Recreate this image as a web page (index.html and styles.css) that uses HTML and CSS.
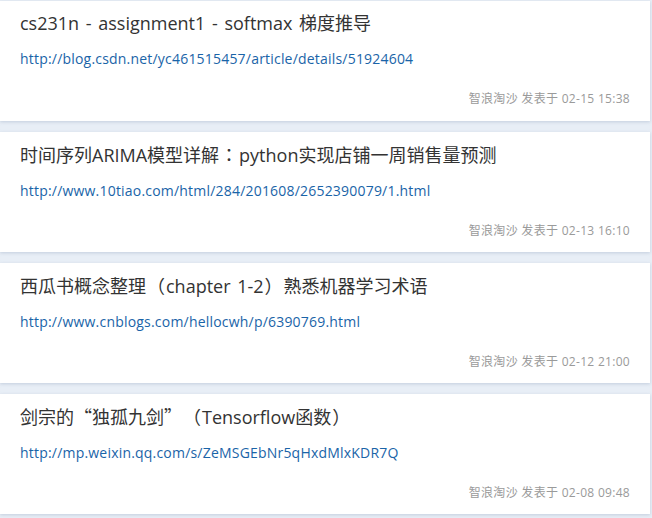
FILE: index.html
```html
<!DOCTYPE html>
<html lang="zh">
<head>
<meta charset="utf-8">
<link rel="stylesheet" href="styles.css">
</head>
<body>
<div class="list">
  <div class="card">
    <div class="title">cs231n - assignment1 - softmax 梯度推导</div>
    <a class="url" href="#">http://blog.csdn.net/yc461515457/article/details/51924604</a>
    <div class="meta">智浪淘沙 发表于 02-15 15:38</div>
  </div>
  <div class="card">
    <div class="title">时间序列ARIMA模型详解<span class="p">：</span>python实现店铺一周销售量预测</div>
    <a class="url" href="#">http://www.10tiao.com/html/284/201608/2652390079/1.html</a>
    <div class="meta">智浪淘沙 发表于 02-13 16:10</div>
  </div>
  <div class="card">
    <div class="title">西瓜书概念整理<span class="p">（</span>chapter 1-2<span class="p">）</span>熟悉机器学习术语</div>
    <a class="url" href="#">http://www.cnblogs.com/hellocwh/p/6390769.html</a>
    <div class="meta">智浪淘沙 发表于 02-12 21:00</div>
  </div>
  <div class="card">
    <div class="title">剑宗的<span class="q ql">“</span>独孤九剑<span class="q">”</span><span class="p">（</span>Tensorflow函数<span class="p">）</span></div>
    <a class="url" href="#">http://mp.weixin.qq.com/s/ZeMSGEbNr5qHxdMlxKDR7Q</a>
    <div class="meta">智浪淘沙 发表于 02-08 09:48</div>
  </div>
</div>
</body>
</html>
```
FILE: styles.css
```css
html, body {
  margin: 0;
  padding: 0;
  background: #e8eef6;
}
body {
  font-family: "Open Sans", "Noto Sans CJK SC", sans-serif;
  width: 652px;
  height: 518px;
  overflow: hidden;
}
.list {
  display: flex;
  flex-direction: column;
  gap: 11px;
  padding-top: 1px;
  width: 650px;
}
.card {
  background: #fff;
  height: 120px;
  box-sizing: border-box;
  padding: 10px 20px 0 20px;
  display: flex;
  flex-direction: column;
  box-shadow: 0 1px 3px rgba(160, 175, 200, 0.5);
}
.title {
  font-size: 18px;
  line-height: 24px;
  word-spacing: 2px;
  color: #333;
}
.p {
  font-family: "Noto Sans CJK TC", sans-serif;
  display: inline-block;
  width: 18px;
  text-align: center;
  margin: 0 1px;
}
.q {
  font-family: "Noto Sans CJK TC", sans-serif;
  display: inline-block;
  width: 18px;
}
.ql {
  text-align: right;
}
.url {
  margin-top: 14px;
  font-size: 14px;
  line-height: 20px;
  letter-spacing: 0.2px;
  color: #1a64a8;
  text-decoration: none;
}
.meta {
  margin-top: 22px;
  align-self: flex-end;
  font-size: 12px;
  letter-spacing: 0.3px;
  line-height: 16px;
  color: #9a9a9a;
}
```
